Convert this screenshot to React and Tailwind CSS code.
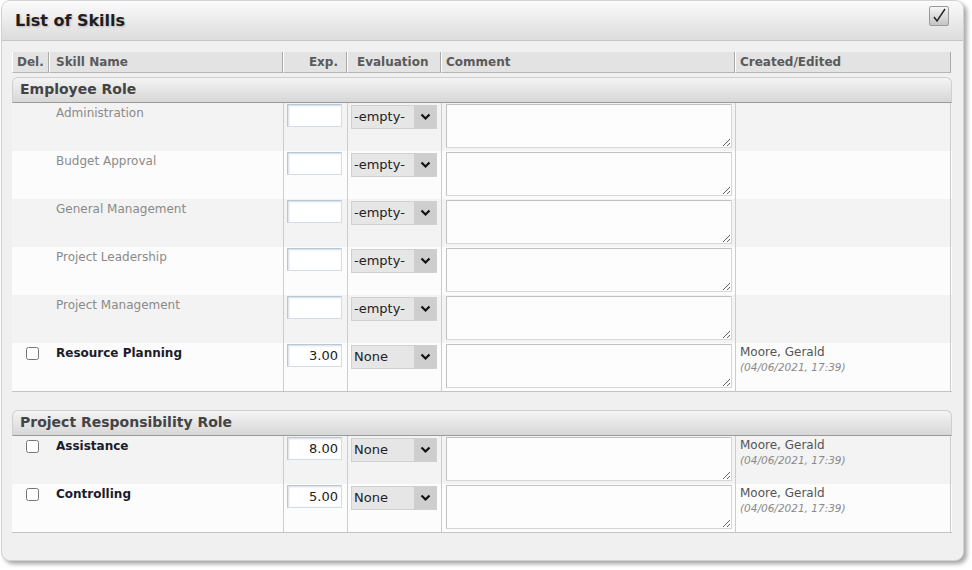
import React from "react";

const font = { fontFamily: '"DejaVu Sans", Verdana, sans-serif' };

const cols = "grid grid-cols-[37px_234px_64px_94px_294px_216px]";

const groups = [
  {
    name: "Employee Role",
    rows: [
      { skill: "Administration", locked: true },
      { skill: "Budget Approval", locked: true },
      { skill: "General Management", locked: true },
      { skill: "Project Leadership", locked: true },
      { skill: "Project Management", locked: true },
      { skill: "Resource Planning", exp: "3.00", by: "Moore, Gerald", at: "(04/06/2021, 17:39)" },
    ],
  },
  {
    name: "Project Responsibility Role",
    rows: [
      { skill: "Assistance", exp: "8.00", by: "Moore, Gerald", at: "(04/06/2021, 17:39)" },
      { skill: "Controlling", exp: "5.00", by: "Moore, Gerald", at: "(04/06/2021, 17:39)" },
    ],
  },
];

function Chevron() {
  return (
    <svg width="11" height="8" viewBox="0 0 11 8">
      <path d="M1.5 1.5 L5.5 5.5 L9.5 1.5" fill="none" stroke="#111" strokeWidth="2.2" />
    </svg>
  );
}

function HeadCell({ children, className = "" }) {
  return (
    <div
      className={
        "h-[21px] flex items-center pb-[1px] bg-[#e3e3e3] border-r border-b border-r-[#a9a9a9] border-b-[#b5b5b5] border-l border-l-white text-[12px] font-bold text-[#5a5a5a] " +
        className
      }
    >
      {children}
    </div>
  );
}

function Row({ row, shade }) {
  return (
    <div className={cols + " h-[48px] " + (shade ? "bg-[#f3f3f3]" : "bg-[#fcfcfc]")}>
      <div className="pl-[14px] pt-[4px]">
        {!row.locked && <input type="checkbox" className="w-[13px] h-[13px] m-0 block" />}
      </div>
      <div
        className={
          "pl-[7px] pt-[1px] text-[12px] " + (row.locked ? "text-[#8a8a8a]" : "font-bold text-[#1b1b2a]")
        }
      >
        {row.skill}
      </div>
      <div className="border-l border-[#cdcdcd] pl-[3px] pt-[1px]">
        <div className="w-[55px] h-[23px] bg-white border border-[#d4dde5] border-t-[#b9c7d3] border-l-[#b9c7d3] shadow-[inset_1px_1px_2px_rgba(90,120,150,0.25)] text-right pr-[3px] text-[13px] leading-[21px] text-[#222]">
          {row.exp || ""}
        </div>
      </div>
      <div className="border-l border-[#cdcdcd] pl-[3px] pt-[2px]">
        <div className="w-[86px] h-[24px] flex border border-[#d0d0d0] bg-[#e6e6e6]">
          <div className="flex-1 pl-[2px] text-[13px] leading-[22px] text-[#222]">
            {row.locked ? "-empty-" : "None"}
          </div>
          <div className="w-[22px] bg-[#cecece] flex items-center justify-center">
            <Chevron />
          </div>
        </div>
      </div>
      <div className="border-l border-[#cdcdcd] pl-[4px] pt-[1px]">
        <textarea
          readOnly
          className="block w-[286px] h-[44px] bg-[#fdfdfd] border border-[#d6d6d6] border-t-[#c2c2c2] border-l-[#c2c2c2] rounded-[1px] outline-none resize"
        />
      </div>
      <div className="border-l border-r border-[#cdcdcd] pl-[4px] pt-[1px]">
        {row.by && (
          <>
            <div className="text-[12px] text-[#555] leading-[16px]">{row.by}</div>
            <div className="text-[10.5px] italic text-[#8a8a8a] leading-[14px]">{row.at}</div>
          </>
        )}
      </div>
    </div>
  );
}

function Group({ group }) {
  return (
    <div>
      <div className="h-[26px] flex items-center pl-[7px] pb-[1px] rounded-t-[6px] border border-[#cfcfcf] border-b-[#9a9a9a] bg-gradient-to-b from-[#f4f4f4] to-[#d7d7d7] text-[14px] font-bold text-[#444]">
        {group.name}
      </div>
      <div className="border-b border-[#c4c4c4]">
        {group.rows.map((r, i) => (
          <Row key={r.skill} row={r} shade={i % 2 === 0} />
        ))}
      </div>
    </div>
  );
}

export default function App() {
  return (
    <div className="w-[972px] h-[570px] bg-white" style={font}>
      <div className="ml-[1px] w-[963px] h-[561px] rounded-[9px] border border-[#d2d2d2] bg-[#f0f0f0] shadow-[3px_3px_4px_rgba(0,0,0,0.35)] overflow-hidden">
        <div className="h-[40px] flex items-center justify-between pl-[13px] pr-[14px] bg-gradient-to-b from-[#fbfbfb] to-[#dcdcdc] border-b border-[#c6c6c6]">
          <div className="text-[16px] font-bold text-[#1e1e1e] [text-shadow:1px_1px_2px_rgba(0,0,0,0.2)]">
            List of Skills
          </div>
          <div className="w-[20px] h-[20px] -mt-[10px] rounded-[2px] border border-[#9a9a9a] bg-gradient-to-b from-[#f6f6f6] to-[#c4c4c4] flex items-center justify-center">
            <svg width="16" height="16" viewBox="0 0 16 16">
              <path d="M3 9 L6 13 L14 1" fill="none" stroke="#222" strokeWidth="1.4" />
            </svg>
          </div>
        </div>
        <div className="pl-[10px] pt-[11px] w-[950px]">
          <div className={cols}>
            <HeadCell className="pl-[4px]">Del.</HeadCell>
            <HeadCell className="pl-[6px]">Skill Name</HeadCell>
            <HeadCell className="justify-end pr-[8px]">Exp.</HeadCell>
            <HeadCell className="pl-[9px]">Evaluation</HeadCell>
            <HeadCell className="pl-[4px]">Comment</HeadCell>
            <HeadCell className="pl-[4px]">Created/Edited</HeadCell>
          </div>
          <div className="mt-[4px]">
            <Group group={groups[0]} />
          </div>
          <div className="mt-[18px]">
            <Group group={groups[1]} />
          </div>
        </div>
      </div>
    </div>
  );
}
